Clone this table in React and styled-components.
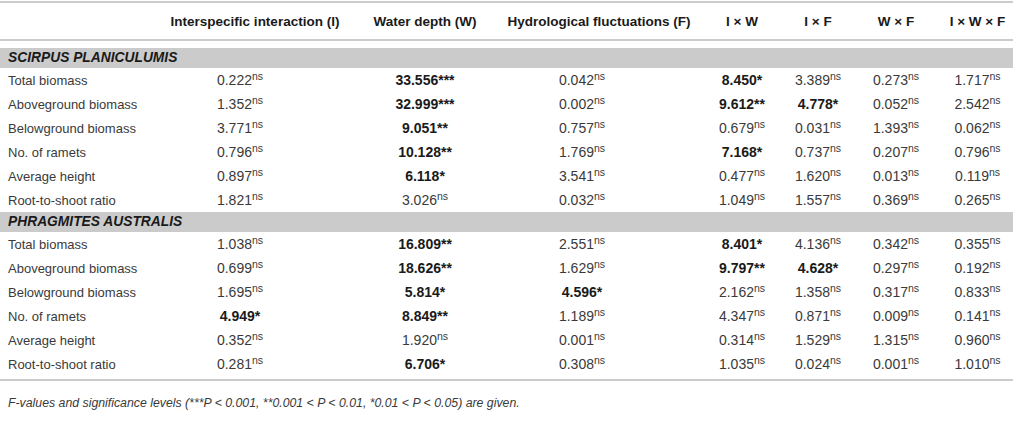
import React from "react";
import styled, { createGlobalStyle } from "styled-components";

const Global = createGlobalStyle`
  html, body { margin: 0; padding: 0; background: #ffffff; }
  body { font-family: "Liberation Sans", Arial, Helvetica, sans-serif; color: #3a3a3a; }
`;

const COLS = "160px 190px 150px 198px 88px 64px 92px 71px";

const Page = styled.div`
  width: 1016px;
  padding-top: 1px;
`;

const Table = styled.div`
  width: 1013px;
  border-top: 2px solid #cbcbcb;
  border-bottom: 2px solid #cbcbcb;
  padding-bottom: 3px;
`;

const HeadRow = styled.div`
  display: grid;
  grid-template-columns: ${COLS};
  height: 36px;
  align-items: center;
  border-bottom: 2px solid #cbcbcb;
`;

const HeadCell = styled.div`
  font-weight: bold;
  font-size: 13.5px;
  color: #1a1a1a;
  text-align: center;
  white-space: nowrap;
`;

const Band = styled.div`
  margin-top: ${(p) => (p.$first ? "7px" : "0")};
  height: 20px;
  line-height: 20px;
  background: #cbcbcb;
  padding-left: 8px;
  font-weight: bold;
  font-style: italic;
  font-size: 13.8px;
  color: #1a1a1a;
  text-transform: uppercase;
`;

const Row = styled.div`
  display: grid;
  grid-template-columns: ${COLS};
  height: 24px;
  align-items: center;
  font-size: 13px;
`;

const Label = styled.div`
  padding-left: 8px;
  white-space: nowrap;
`;

const Value = styled.div`
  text-align: center;
  white-space: nowrap;
  font-size: 14px;
  padding-right: ${(p) => p.$shift || 0}px;
  font-weight: ${(p) => (p.$bold ? "bold" : "normal")};
  color: ${(p) => (p.$bold ? "#1a1a1a" : "#3a3a3a")};
`;

const Sup = styled.sup`
  font-size: 10.5px;
  vertical-align: 5px;
  line-height: 0;
`;

const Note = styled.p`
  margin: 15px 0 0 8px;
  font-size: 12.3px;
  line-height: 14px;
  font-style: italic;
  color: #3a3a3a;
`;

const shifts = [30, 0, 34, 0, 0, 0, 0];

const sections = [
  {
    name: "Scirpus planiculumis",
    rows: [
      ["Total biomass", ["0.222", "33.556***", "0.042", "8.450*", "3.389", "0.273", "1.717"]],
      ["Aboveground biomass", ["1.352", "32.999***", "0.002", "9.612**", "4.778*", "0.052", "2.542"]],
      ["Belowground biomass", ["3.771", "9.051**", "0.757", "0.679", "0.031", "1.393", "0.062"]],
      ["No. of ramets", ["0.796", "10.128**", "1.769", "7.168*", "0.737", "0.207", "0.796"]],
      ["Average height", ["0.897", "6.118*", "3.541", "0.477", "1.620", "0.013", "0.119"]],
      ["Root-to-shoot ratio", ["1.821", "3.026", "0.032", "1.049", "1.557", "0.369", "0.265"]],
    ],
  },
  {
    name: "Phragmites australis",
    rows: [
      ["Total biomass", ["1.038", "16.809**", "2.551", "8.401*", "4.136", "0.342", "0.355"]],
      ["Aboveground biomass", ["0.699", "18.626**", "1.629", "9.797**", "4.628*", "0.297", "0.192"]],
      ["Belowground biomass", ["1.695", "5.814*", "4.596*", "2.162", "1.358", "0.317", "0.833"]],
      ["No. of ramets", ["4.949*", "8.849**", "1.189", "4.347", "0.871", "0.009", "0.141"]],
      ["Average height", ["0.352", "1.920", "0.001", "0.314", "1.529", "1.315", "0.960"]],
      ["Root-to-shoot ratio", ["0.281", "6.706*", "0.308", "1.035", "0.024", "0.001", "1.010"]],
    ],
  },
];

const headers = [
  "",
  "Interspecific interaction (I)",
  "Water depth (W)",
  "Hydrological fluctuations (F)",
  "I × W",
  "I × F",
  "W × F",
  "I × W × F",
];

function Cell({ v, shift }) {
  const bold = v.includes("*");
  return (
    <Value $bold={bold} $shift={shift}>
      {v}
      {!bold && <Sup>ns</Sup>}
    </Value>
  );
}

export default function App() {
  return (
    <Page>
      <Global />
      <Table>
        <HeadRow>
          {headers.map((h, i) => (
            <HeadCell key={i}>{h}</HeadCell>
          ))}
        </HeadRow>
        {sections.map((s, si) => (
          <React.Fragment key={s.name}>
            <Band $first={si === 0}>{s.name}</Band>
            {s.rows.map(([label, vals]) => (
              <Row key={label}>
                <Label>{label}</Label>
                {vals.map((v, i) => (
                  <Cell key={i} v={v} shift={shifts[i]} />
                ))}
              </Row>
            ))}
          </React.Fragment>
        ))}
      </Table>
      <Note>
        F-values and significance levels (***P &lt; 0.001, **0.001 &lt; P &lt; 0.01, *0.01 &lt; P &lt; 0.05) are given.
      </Note>
    </Page>
  );
}
